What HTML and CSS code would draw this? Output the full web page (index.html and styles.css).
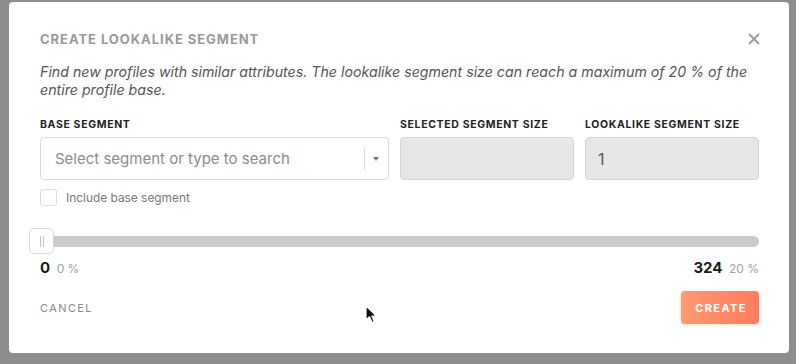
FILE: index.html
```html
<!DOCTYPE html>
<html lang="en">
<head>
    <meta charset="UTF-8">
    <meta name="viewport" content="width=device-width, initial-scale=1.0">
    <title>Create Lookalike Segment</title>
    <link rel="stylesheet" href="styles.css">
</head>
<body>
    <div class="modal">
        <div class="modal-header">
            <h2>Create Lookalike Segment</h2>
            <button class="close" aria-label="Close">
                <svg width="12" height="12" viewBox="0 0 12 12">
                    <path d="M1 1 L11 11 M11 1 L1 11" stroke="#9a9a9a" stroke-width="1.8" fill="none"/>
                </svg>
            </button>
        </div>
        <p class="description">Find new profiles with similar attributes. The lookalike segment size can reach a maximum of 20 % of the entire profile base.</p>

        <div class="fields">
            <div class="field field-base">
                <label>Base segment</label>
                <div class="select">
                    <span class="placeholder">Select segment or type to search</span>
                    <span class="separator"></span>
                    <span class="arrow"></span>
                </div>
            </div>
            <div class="field">
                <label>Selected segment size</label>
                <div class="readonly"></div>
            </div>
            <div class="field">
                <label>Lookalike segment size</label>
                <div class="readonly">1</div>
            </div>
        </div>

        <div class="checkbox-row">
            <span class="checkbox"></span>
            <span>Include base segment</span>
        </div>

        <div class="slider">
            <div class="track"></div>
            <div class="handle"><span></span><span></span></div>
        </div>
        <div class="range-values">
            <div><strong>0</strong> <span>0 %</span></div>
            <div><strong>324</strong> <span>20 %</span></div>
        </div>

        <div class="modal-footer">
            <button class="cancel">Cancel</button>
            <button class="create">Create</button>
        </div>

        <svg class="cursor" width="13" height="19" viewBox="0 0 13 19">
            <path d="M1 1 L1 15 L4.5 11.8 L7 17.5 L9.3 16.5 L6.9 11 L11.5 11 Z" fill="#111" stroke="#fff" stroke-width="1.2" stroke-linejoin="round"/>
        </svg>
    </div>
</body>
</html>
```

FILE: styles.css
```css
body {
    margin: 0;
    background-color: #8d8d8d;
    font-family: 'Inter', 'Noto Sans', sans-serif;
    height: 364px;
    overflow: hidden;
}
.modal {
    position: relative;
    box-sizing: border-box;
    width: 780px;
    height: 351px;
    margin: 2px 0 0 9px;
    padding: 29px 30px 29px 31px;
    background-color: #ffffff;
    border-radius: 4px;
}
.modal-header {
    display: flex;
    justify-content: space-between;
    align-items: center;
}
.modal-header h2 {
    margin: 0;
    font-size: 13px;
    line-height: 16px;
    font-weight: 700;
    letter-spacing: 0.95px;
    text-transform: uppercase;
    color: #9a9a9a;
}
.close {
    border: none;
    background: none;
    padding: 0;
    width: 12px;
    height: 12px;
    margin-right: -1px;
    display: flex;
    cursor: pointer;
}
.description {
    margin: 16px 0 0;
    font-size: 14.2px;
    line-height: 18px;
    font-style: italic;
    color: #555555;
}
.fields {
    display: grid;
    grid-template-columns: 349px 174px 174px;
    gap: 11px;
    margin-top: 19px;
}
.field label {
    display: block;
    font-size: 10.5px;
    line-height: 13px;
    font-weight: 700;
    letter-spacing: 0.65px;
    text-transform: uppercase;
    color: #222222;
    margin-bottom: 6px;
}
.select, .readonly {
    box-sizing: border-box;
    height: 43px;
    border-radius: 4px;
    display: flex;
    align-items: center;
    font-size: 16px;
}
.select {
    border: 1px solid #dcdcdc;
    padding: 0 0 0 14px;
}
.placeholder {
    flex: 1;
    font-size: 15px;
    color: #8c8c8c;
}
.separator {
    width: 1px;
    height: 23px;
    background-color: #dddddd;
}
.arrow {
    width: 0;
    height: 0;
    margin: 0 9px 0 8px;
    border-left: 3.5px solid transparent;
    border-right: 3.5px solid transparent;
    border-top: 4px solid #777777;
}
.readonly {
    background-color: #e7e7e7;
    border: 1px solid #d6d6d6;
    padding: 0 12px;
    color: #555555;
}
.checkbox-row {
    display: flex;
    align-items: center;
    gap: 9px;
    margin-top: 9px;
    font-size: 11.9px;
    color: #7a7a7a;
}
.checkbox {
    box-sizing: border-box;
    width: 17px;
    height: 17px;
    border: 1px solid #dcdcdc;
    border-radius: 3px;
}
.slider {
    position: relative;
    height: 26px;
    margin-top: 22px;
    display: flex;
    align-items: center;
}
.track {
    flex: 1;
    height: 11px;
    border-radius: 6px;
    background-color: #cbcbcb;
}
.handle {
    position: absolute;
    left: -11px;
    top: 0;
    box-sizing: border-box;
    width: 25px;
    height: 26px;
    background-color: #ffffff;
    border: 1px solid #d8d8d8;
    border-radius: 5px;
    display: flex;
    justify-content: center;
    align-items: center;
    gap: 2px;
}
.handle span {
    width: 1px;
    height: 11px;
    background-color: #c4c4c4;
}
.range-values {
    display: flex;
    justify-content: space-between;
    margin-top: 4px;
    line-height: 18px;
}
.range-values strong {
    font-size: 15px;
    font-weight: 700;
    color: #1a1a1a;
}
.range-values span {
    font-size: 12px;
    color: #a0a0a0;
    margin-left: 2px;
}
.modal-footer {
    display: flex;
    justify-content: space-between;
    align-items: center;
    margin-top: 13px;
}
.cancel, .create {
    font-family: inherit;
    font-size: 11px;
    letter-spacing: 1.4px;
    text-transform: uppercase;
    cursor: pointer;
}
.cancel {
    border: none;
    background: none;
    padding: 0;
    color: #8a8a8a;
}
.create {
    width: 78px;
    height: 33px;
    border: none;
    border-radius: 4px;
    padding: 0 0 0 2px;
    font-weight: 700;
    color: #ffffff;
    background: linear-gradient(90deg, #ff9a72, #ff7c5f);
    box-shadow: 0 1px 3px rgba(255, 140, 100, 0.35);
}
.cursor {
    position: absolute;
    left: 356px;
    top: 303px;
}
```
